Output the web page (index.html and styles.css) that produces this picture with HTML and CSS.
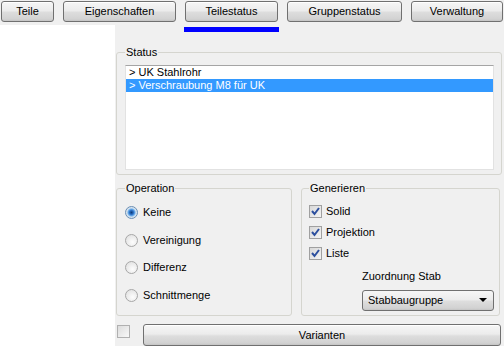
FILE: index.html
```html
<!DOCTYPE html>
<html lang="de">
  <head>
    <meta charset="utf-8">
    <link rel="stylesheet" href="styles.css">
    <title>Teilestatus</title>
  </head>
  <body>
    <header class="tabs">
      <button class="btn tab t-teile">Teile</button>
      <button class="btn tab t-eigen">Eigenschaften</button>
      <button class="btn tab t-status active">Teilestatus</button>
      <button class="btn tab t-gruppen">Gruppenstatus</button>
      <button class="btn tab t-verw">Verwaltung</button>
    </header>

    <div class="main">
      <aside class="tree"></aside>

      <section class="panel">
        <fieldset class="group status">
          <legend>Status</legend>
          <ul class="list">
            <li>&gt; UK Stahlrohr</li>
            <li class="sel">&gt; Verschraubung M8 für UK</li>
          </ul>
        </fieldset>

        <div class="groups">
          <fieldset class="group operation">
            <legend>Operation</legend>
            <div class="opt"><span class="radio on"></span>Keine</div>
            <div class="opt"><span class="radio"></span>Vereinigung</div>
            <div class="opt"><span class="radio"></span>Differenz</div>
            <div class="opt"><span class="radio"></span>Schnittmenge</div>
          </fieldset>

          <fieldset class="group generate">
            <legend>Generieren</legend>
            <div class="opt"><span class="check on"><svg width="11" height="11" viewBox="0 0 11 11"><polyline points="2,5 4.5,8 9,2" fill="none" stroke="#2c4f9e" stroke-width="2"/></svg></span>Solid</div>
            <div class="opt"><span class="check on"><svg width="11" height="11" viewBox="0 0 11 11"><polyline points="2,5 4.5,8 9,2" fill="none" stroke="#2c4f9e" stroke-width="2"/></svg></span>Projektion</div>
            <div class="opt"><span class="check on"><svg width="11" height="11" viewBox="0 0 11 11"><polyline points="2,5 4.5,8 9,2" fill="none" stroke="#2c4f9e" stroke-width="2"/></svg></span>Liste</div>
            <div class="caption">Zuordnung Stab</div>
            <div class="combo">Stabbaugruppe<span class="arrow"></span></div>
          </fieldset>
        </div>

        <div class="bottom">
          <span class="check"></span>
          <button class="btn wide">Varianten</button>
        </div>
      </section>
    </div>
  </body>
</html>
```

FILE: styles.css
```css
* { box-sizing: border-box; }
body {
    margin: 0;
    width: 504px;
    height: 346px;
    overflow: hidden;
    background: #f0f0f0;
    color: #000;
    font: 11px/13px "Liberation Sans", Arial, sans-serif;
}

/* buttons */
.btn {
    font: inherit;
    color: #000;
    height: 21px;
    padding: 0;
    border: 1px solid #707070;
    border-radius: 3px;
    background: linear-gradient(#f6f6f6, #ececec 45%, #dddddd 55%, #d2d2d2 90%, #c4c4c4);
    box-shadow: inset 0 1px 0 #fff;
}

.tabs {
    display: flex;
    gap: 9px;
    height: 25px;
    padding: 1px 0 0 1px;
}
.tab { position: relative; }
.t-teile { width: 53px; }
.t-eigen { width: 113px; }
.t-status { width: 93px; }
.t-gruppen { width: 115px; }
.t-verw { width: 92px; }
.tab.active::after {
    content: "";
    position: absolute;
    left: -2px;
    right: -2px;
    top: 25px;
    height: 5px;
    background: #0000ff;
}

.main {
    display: flex;
    height: 321px;
}
.tree {
    width: 115px;
    background: #fff;
}
.panel {
    flex: 1;
    display: flex;
    flex-direction: column;
    padding: 21px 2px 0 1px;
}

/* group boxes */
.group {
    margin: 0;
    border: 1px solid #d5d5cf;
    border-radius: 3px;
    min-width: 0;
}
.group legend {
    padding: 0 1px;
    line-height: 13px;
}
.status {
    padding: 0 7px 4px 8px;
}
.list {
    list-style: none;
    margin: 6px 0 0;
    padding: 0;
    height: 105px;
    background: #fff;
    border: 1px solid #e2e2e2;
    border-top-color: #a5a5a5;
}
.list li {
    height: 13px;
    padding-left: 3px;
    white-space: nowrap;
}
.list li.sel {
    background: #3399ff;
    color: #fff;
}

.groups {
    display: flex;
    gap: 9px;
    margin: 7px 2px 0 0;
    height: 134px;
}
.operation {
    width: 176px;
    padding: 11px 0 0 8px;
    display: flex;
    flex-direction: column;
    gap: 14.5px;
}
.generate {
    flex: 1;
    padding: 10px 0 0 7px;
    display: flex;
    flex-direction: column;
    gap: 8px;
}
.opt {
    display: flex;
    align-items: center;
    gap: 5px;
    height: 13px;
}
.generate .opt { gap: 4px; }

.radio {
    width: 13px;
    height: 13px;
    border-radius: 50%;
    border: 1px solid #a7a7a7;
    background: radial-gradient(circle at 60% 65%, #fdfdfd, #dcdcdc);
}
.radio.on {
    border-color: #6a8fb5;
    background: radial-gradient(circle, #0c3a78 0, #2a6fc4 2px, #6fb0ec 3.5px, #cfe0f0 4.5px, #e6e6e6 6px);
}
.check {
    width: 13px;
    height: 13px;
    border: 1px solid #a0a0a0;
    background: linear-gradient(135deg, #d8d8d8, #f4f4f4);
}
.check svg { display: block; }

.caption {
    margin: 2px 0 0 53px;
}
.combo {
    position: relative;
    margin: -1px 0 0 53px;
    width: 132px;
    height: 21px;
    padding: 3px 0 0 5px;
    border: 1px solid #707070;
    border-radius: 3px;
    background: linear-gradient(#f6f6f6, #ececec 45%, #dddddd 55%, #d2d2d2 90%, #c4c4c4);
}
.arrow {
    position: absolute;
    right: 6px;
    top: 7px;
    border-left: 4px solid transparent;
    border-right: 4px solid transparent;
    border-top: 4px solid #000;
}

.bottom {
    display: flex;
    align-items: flex-start;
    gap: 13px;
    margin-top: 8px;
}
.bottom .check {
    margin: 1px 0 0 1px;
    border-color: #b0b0b0;
    background: linear-gradient(135deg, #dcdcdc, #f8f8f8);
}
.wide {
    flex: 1;
    height: 22px;
    margin-right: 1px;
}
```
